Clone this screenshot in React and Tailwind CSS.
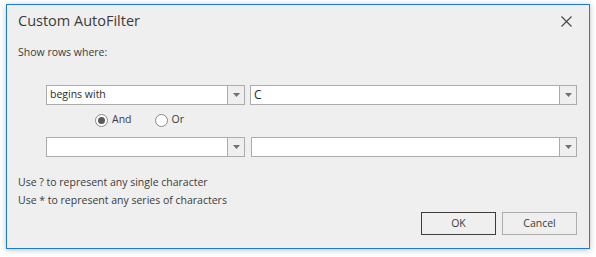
const font = { fontFamily: '"Segoe UI", "Open Sans", "Noto Sans", sans-serif' };

function Arrow() {
  return (
    <div className="flex w-[17px] shrink-0 items-center justify-center border-l border-[#acacac] bg-[#efefef]">
      <svg width="7" height="4" viewBox="0 0 7 4">
        <path d="M0 0h7L3.5 4z" fill="#707070" />
      </svg>
    </div>
  );
}

function Combo({ value, className }) {
  return (
    <div className={`flex h-[20px] border border-[#acacac] bg-white ${className}`}>
      <div className="flex flex-1 items-center pl-[3px] text-[10.5px] text-[#2b2b2b]">{value}</div>
      <Arrow />
    </div>
  );
}

function Radio({ label, checked }) {
  return (
    <div className="flex items-center gap-[4px]">
      <div className="flex h-[13px] w-[13px] items-center justify-center rounded-full border border-[#8a8a8a] bg-white">
        {checked && <div className="h-[7px] w-[7px] rounded-full bg-[#5a5a5a]" />}
      </div>
      <span className="text-[10.5px] text-[#3b3b3b]">{label}</span>
    </div>
  );
}

export default function App() {
  return (
    <div className="h-[257px] w-[596px] bg-white pl-[6px] pt-[4px]" style={font}>
      <div className="flex h-[245px] w-[584px] flex-col border border-[#1c7cd5] bg-[#efefef] shadow-[0_1px_6px_rgba(0,0,0,0.25)]">
        <div className="flex h-[31px] items-center justify-between pl-[11px] pr-[17px] pt-[1px]">
          <span className="text-[14.5px] text-[#3b3b3b]">Custom AutoFilter</span>
          <svg width="11" height="11" viewBox="0 0 11 11">
            <path d="M0.5 0.5l10 10M10.5 0.5l-10 10" stroke="#444" strokeWidth="1.1" />
          </svg>
        </div>
        <div className="mt-[9px] pl-[11px] text-[10.5px] leading-[15px] text-[#3b3b3b]">Show rows where:</div>
        <div className="mt-[25px] flex pl-[39px]">
          <Combo value="begins with" className="w-[199px]" />
          <Combo value={<span className="text-[12px]">C</span>} className="ml-[5px] w-[327px]" />
        </div>
        <div className="mt-[5px] flex h-[20px] items-center gap-[23px] pl-[88px]">
          <Radio label="And" checked />
          <Radio label="Or" />
        </div>
        <div className="mt-[7px] flex pl-[39px]">
          <Combo value="" className="w-[199px]" />
          <Combo value="" className="ml-[6px] w-[326px]" />
        </div>
        <div className="mt-[16px] pl-[11px] text-[10.5px] leading-[18px] text-[#3b3b3b]">
          <div>Use ? to represent any single character</div>
          <div>Use * to represent any series of characters</div>
        </div>
        <div className="mt-[3px] flex justify-end gap-[6px] pr-[12px]">
          <button className="h-[23px] w-[75px] border border-[#3c3c3c] bg-[#efefef] text-[10.5px] text-[#3b3b3b]">OK</button>
          <button className="h-[23px] w-[75px] border border-[#adadad] bg-[#efefef] text-[10.5px] text-[#3b3b3b]">Cancel</button>
        </div>
      </div>
    </div>
  );
}
